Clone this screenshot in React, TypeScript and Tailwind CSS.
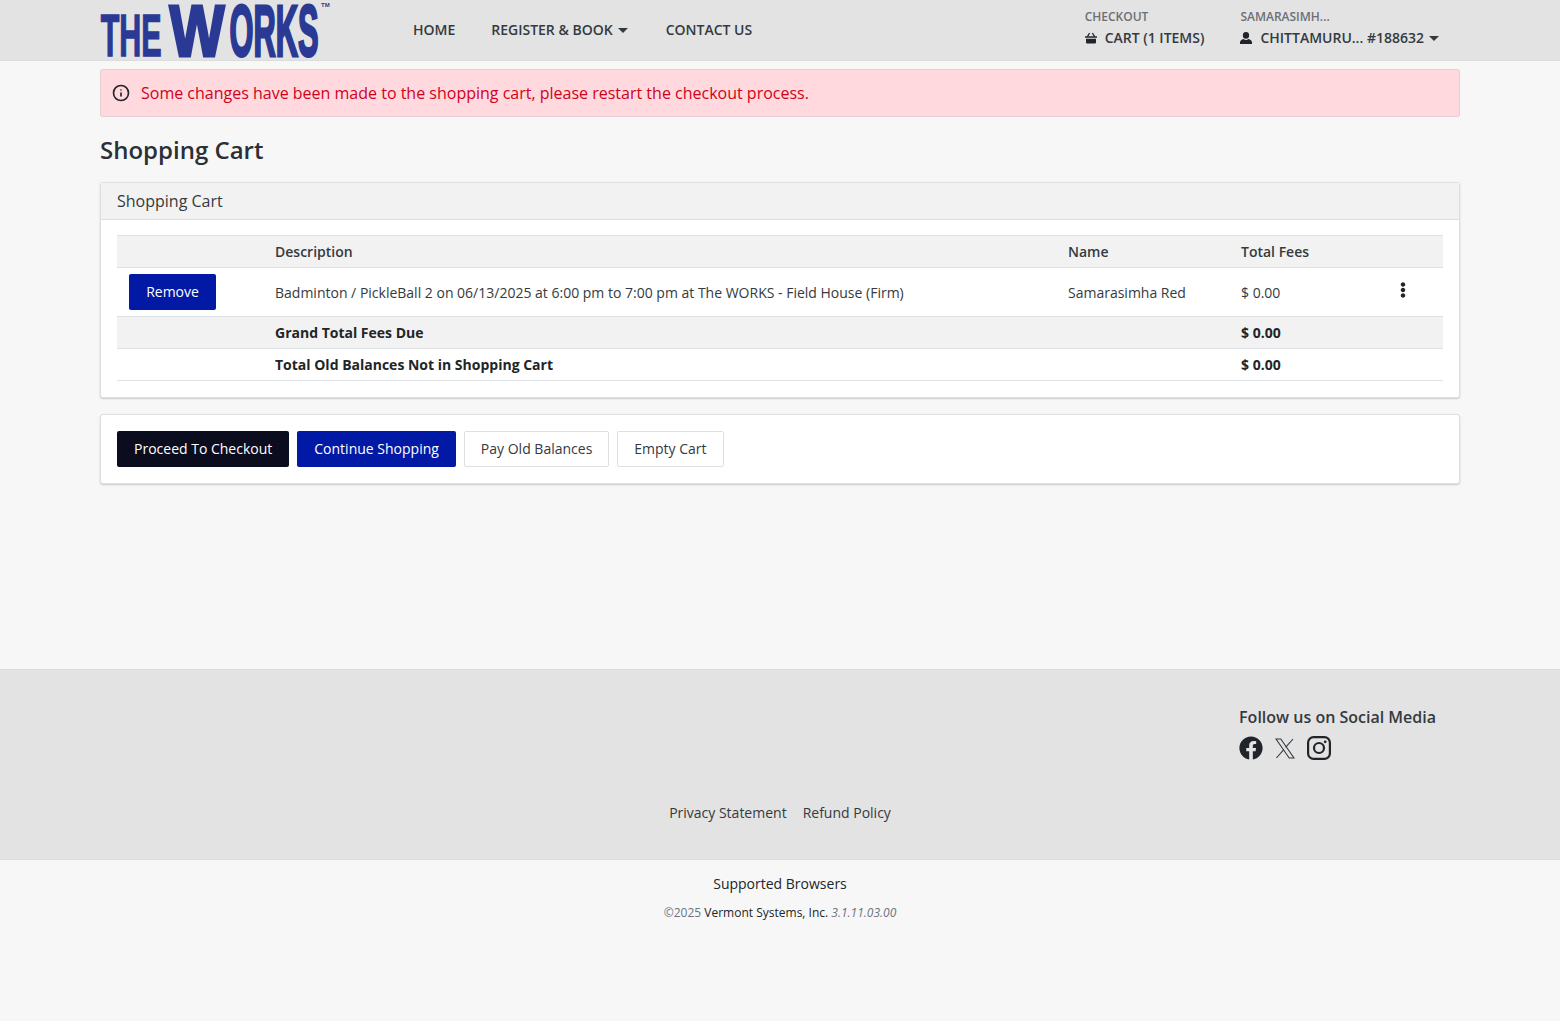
import { FaEllipsisV, FaFacebook } from 'react-icons/fa'
import { Info } from 'lucide-react'

function Logo() {
  return (
    <svg width="232" height="60" viewBox="0 0 232 60" className="block" aria-label="The Works">
      <g fontFamily="Liberation Sans" fontWeight="700" fill="#2a3a94" stroke="#2a3a94">
        <text x="0.7" y="56.2" fontSize="59" strokeWidth="1.5" textLength="61" lengthAdjust="spacingAndGlyphs">THE</text>
        <text x="69.5" y="55.5" fontSize="73" strokeWidth="3" textLength="55" lengthAdjust="spacingAndGlyphs">W</text>
        <text x="129.5" y="55.5" fontSize="73" strokeWidth="3" textLength="89" lengthAdjust="spacingAndGlyphs">ORKS</text>
      </g>
      <text x="221" y="7" fontFamily="Liberation Sans" fontWeight="700" fontSize="6" fill="#2a3a94">TM</text>
    </svg>
  )
}

function Caret({ className }: { className?: string }) {
  return (
    <svg width="10" height="5" viewBox="0 0 10 5" className={className}>
      <path d="M0 0h10L5 5z" fill="#343a40" />
    </svg>
  )
}

function BasketIcon() {
  return (
    <svg width="12" height="12" viewBox="0 0 12 12" fill="#212529">
      <path d="M2.4 4.6L4.6 1M9.6 4.6L7.4 1" stroke="#212529" strokeWidth="1.3" fill="none" />
      <rect x="0" y="4.2" width="12" height="1.6" rx="0.3" />
      <path d="M1 6.8h10v3.7a1 1 0 0 1-1 1H2a1 1 0 0 1-1-1z" />
    </svg>
  )
}

function UserIcon() {
  return (
    <svg width="12" height="12" viewBox="0 0 12 12" fill="#212529">
      <ellipse cx="6" cy="3.4" rx="3.1" ry="3.3" />
      <path d="M3.6 6.9C4.3 7.6 5.1 8 6 8s1.7-.4 2.4-1.1C10.4 7.1 12 8.6 12 10.4V12H0v-1.6c0-1.8 1.6-3.3 3.6-3.5z" />
    </svg>
  )
}

function XLogo() {
  return (
    <svg width="20" height="21" viewBox="0 0 20 21" fill="none" stroke="#343a40" strokeWidth="1.1">
      <path d="M1 1h4.8l13.2 19h-4.8z" />
      <path d="M18 1l-7.4 8.4M8.8 11.6L1.4 20" />
    </svg>
  )
}

function InstagramLogo() {
  return (
    <svg width="24" height="24" viewBox="0 0 24 24" fill="none" stroke="#212529" strokeWidth="2.2">
      <rect x="1.1" y="1.1" width="21.8" height="21.8" rx="5.5" />
      <circle cx="12" cy="12" r="5" />
      <circle cx="18.2" cy="5.8" r="1.4" fill="#212529" stroke="none" />
    </svg>
  )
}

function Header() {
  return (
    <header className="h-[61px] bg-[#e3e3e3] border-b border-[#dcdcdc]">
      <div className="mx-[100px] flex h-[60px] items-center">
        <div className="w-[313px]">
          <Logo />
        </div>
        <nav className="flex items-center gap-9 text-sm font-semibold text-[#343a40]">
          <a>HOME</a>
          <a className="flex items-center">
            REGISTER &amp; BOOK <Caret className="mr-[2px] ml-[5px]" />
          </a>
          <a>CONTACT US</a>
        </nav>
        <div className="ml-auto mr-[21px] flex gap-9 pb-1 text-sm font-semibold text-[#343a40]">
          <div>
            <div className="text-xs leading-[18px] text-[#6c7075]">CHECKOUT</div>
            <div className="mt-[2px] flex items-center gap-2 leading-5">
              <BasketIcon /> CART (1 ITEMS)
            </div>
          </div>
          <div>
            <div className="text-xs leading-[18px] text-[#6c7075]">SAMARASIMH...</div>
            <div className="mt-[2px] flex items-center gap-2 leading-5">
              <UserIcon />
              <span className="flex items-center">
                CHITTAMURU... #188632
                <Caret className="ml-[5px]" />
              </span>
            </div>
          </div>
        </div>
      </div>
    </header>
  )
}

function CartTable() {
  const cell = 'p-0 align-middle'
  return (
    <table className="w-full table-fixed border-collapse text-sm text-[#343a40]">
      <colgroup>
        <col className="w-[158px]" />
        <col className="w-[793px]" />
        <col className="w-[173px]" />
        <col />
      </colgroup>
      <tbody>
        <tr className="h-8 border-y border-[#dee2e6] bg-[#f2f2f2] font-semibold">
          <td className={cell}></td>
          <td className={cell}>Description</td>
          <td className={cell}>Name</td>
          <td className={cell}>Total Fees</td>
        </tr>
        <tr className="h-[49px] border-b border-[#dee2e6]">
          <td className={cell}>
            <button className="ml-3 h-9 w-[87px] rounded-[2px] bg-[#0219a6] text-white">Remove</button>
          </td>
          <td className={`${cell} pt-[2px]`}>Badminton / PickleBall 2 on 06/13/2025 at 6:00 pm to 7:00 pm at The WORKS - Field House (Firm)</td>
          <td className={`${cell} pt-[2px]`}>Samarasimha Red</td>
          <td className={cell}>
            <div className="flex items-center justify-between pr-8">
              <span className="pt-[2px]">$ 0.00</span>
              <FaEllipsisV className="mb-1 text-base text-[#212529]" />
            </div>
          </td>
        </tr>
        <tr className="h-8 border-b border-[#dee2e6] bg-[#f2f2f2] font-bold text-[#212529]">
          <td className={cell}></td>
          <td className={cell}>Grand Total Fees Due</td>
          <td className={cell}></td>
          <td className={cell}>$ 0.00</td>
        </tr>
        <tr className="h-8 border-b border-[#dee2e6] font-bold text-[#212529]">
          <td className={cell}></td>
          <td className={cell}>Total Old Balances Not in Shopping Cart</td>
          <td className={cell}></td>
          <td className={cell}>$ 0.00</td>
        </tr>
      </tbody>
    </table>
  )
}

export default function App() {
  return (
    <div className="min-h-[1021px] bg-[#f7f7f7] font-['Open_Sans',sans-serif] text-[#343a40]">
      <Header />
      <main className="mx-[100px] h-[608px] pt-2">
        <div className="flex h-12 items-center gap-[11px] rounded-[2px] border border-[#e8cfd3] bg-[#ffd9dd] pl-[11px] text-base text-[#d0011b]">
          <Info size={18} strokeWidth={2.2} className="text-[#212529]" />
          Some changes have been made to the shopping cart, please restart the checkout process.
        </div>
        <h1 className="mt-[17px] text-2xl leading-8 font-semibold text-[#2b3036]">Shopping Cart</h1>
        <section className="mt-4 rounded-[3px] border border-[#dfdfdf] bg-white shadow-[0_1px_2px_rgba(0,0,0,0.18)]">
          <div className="flex h-[37px] items-center border-b border-[#dfdfdf] bg-[#f2f2f2] px-4 text-base">Shopping Cart</div>
          <div className="px-4 pt-[15px] pb-4">
            <CartTable />
          </div>
        </section>
        <section className="mt-4 flex h-[70px] items-center gap-2 rounded-[3px] border border-[#dfdfdf] bg-white px-4 text-sm shadow-[0_1px_2px_rgba(0,0,0,0.18)]">
          <button className="h-9 rounded-[2px] bg-[#0b0c1e] px-[17px] text-white">Proceed To Checkout</button>
          <button className="h-9 rounded-[2px] bg-[#0219a6] px-[17px] text-white">Continue Shopping</button>
          <button className="h-9 rounded-[2px] border border-[#dfdfdf] bg-white px-4">Pay Old Balances</button>
          <button className="h-9 rounded-[2px] border border-[#dfdfdf] bg-white px-4">Empty Cart</button>
        </section>
      </main>
      <footer className="h-[191px] border-y border-[#dcdcdc] bg-[#e3e3e3]">
        <div className="mx-[100px] flex justify-end pt-9 pr-6">
          <div>
            <div className="text-base leading-[22px] font-semibold">Follow us on Social Media</div>
            <div className="mt-[8px] flex items-center gap-3 text-2xl text-[#212529]">
              <FaFacebook />
              <XLogo />
              <InstagramLogo />
            </div>
          </div>
        </div>
        <div className="mt-[43px] flex justify-center gap-4 text-sm leading-5">
          <a>Privacy Statement</a>
          <a>Refund Policy</a>
        </div>
      </footer>
      <div className="pt-[14px] text-center">
        <div className="text-sm leading-5 text-[#212529]">Supported Browsers</div>
        <div className="mt-[10px] text-xs leading-[18px] text-[#6c757d]">
          ©2025 <span className="text-[#212529]">Vermont Systems, Inc.</span> <i>3.1.11.03.00</i>
        </div>
      </div>
    </div>
  )
}
